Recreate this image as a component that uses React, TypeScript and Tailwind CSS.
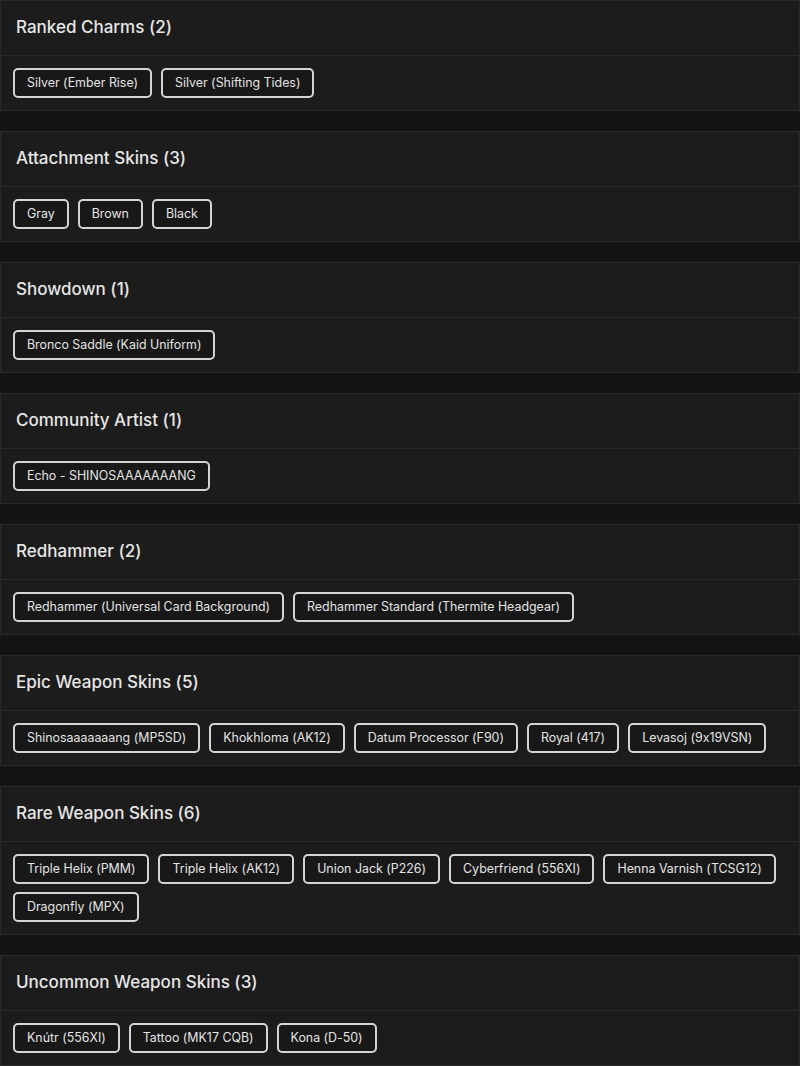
import React from 'react';

type Group = { title: string; items: string[] };

const groups: Group[] = [
  { title: 'Ranked Charms', items: ['Silver (Ember Rise)', 'Silver (Shifting Tides)'] },
  { title: 'Attachment Skins', items: ['Gray', 'Brown', 'Black'] },
  { title: 'Showdown', items: ['Bronco Saddle (Kaid Uniform)'] },
  { title: 'Community Artist', items: ['Echo - SHINOSAAAAAAANG'] },
  {
    title: 'Redhammer',
    items: ['Redhammer (Universal Card Background)', 'Redhammer Standard (Thermite Headgear)'],
  },
  {
    title: 'Epic Weapon Skins',
    items: [
      'Shinosaaaaaaang (MP5SD)',
      'Khokhloma (AK12)',
      'Datum Processor (F90)',
      'Royal (417)',
      'Levasoj (9x19VSN)',
    ],
  },
  {
    title: 'Rare Weapon Skins',
    items: [
      'Triple Helix (PMM)',
      'Triple Helix (AK12)',
      'Union Jack (P226)',
      'Cyberfriend (556XI)',
      'Henna Varnish (TCSG12)',
      'Dragonfly (MPX)',
    ],
  },
  {
    title: 'Uncommon Weapon Skins',
    items: ['Knútr (556XI)', 'Tattoo (MK17 CQB)', 'Kona (D-50)'],
  },
];

const Chip = ({ label }: { label: string }) => (
  <span className="rounded-[5px] border-2 border-[#d4d4d4] bg-[#181818] px-3 py-[4px] text-[12.4px] leading-[18px] text-[#e4e4e4]">
    {label}
  </span>
);

export default function App() {
  return (
    <div
      className="flex min-h-[1066px] flex-col gap-5 bg-[#141414]"
      style={{ fontFamily: 'Inter, "Noto Sans", sans-serif', fontFeatureSettings: '"calt" 0' }}
    >
      {groups.map((g) => (
        <section key={g.title} className="border border-[#2a2a2a] bg-[#1c1c1c]">
          <h2 className="flex h-[55px] items-center border-b border-[#2a2a2a] px-[15px] text-[17px] font-medium text-[#e6e6e6]">
            {g.title} ({g.items.length})
          </h2>
          <div className="flex flex-wrap gap-x-[9px] gap-y-2 px-3 py-3">
            {g.items.map((it) => (
              <Chip key={it} label={it} />
            ))}
          </div>
        </section>
      ))}
    </div>
  );
}
